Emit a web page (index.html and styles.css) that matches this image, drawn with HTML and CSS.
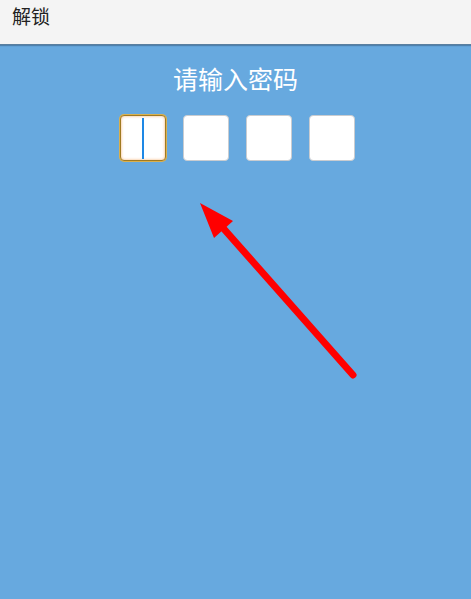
FILE: index.html
```html
<!DOCTYPE html>
<html lang="zh">
<head>
<meta charset="utf-8">
<title>解锁</title>
<link rel="stylesheet" href="styles.css">
</head>
<body>
<header class="topbar">解锁</header>
<main class="content">
  <h1 class="title">请输入密码</h1>
  <div class="pin-row">
    <div class="pin-box active"><span class="cursor"></span></div>
    <div class="pin-box"></div>
    <div class="pin-box"></div>
    <div class="pin-box"></div>
  </div>
  <svg class="arrow" width="471" height="599" viewBox="0 0 471 599">
    <line x1="353" y1="375" x2="216" y2="220" stroke="#ff0000" stroke-width="7" stroke-linecap="round"/>
    <polygon points="200,203 233,221 214,238" fill="#ff0000"/>
  </svg>
</main>
</body>
</html>
```

FILE: styles.css
```css
html, body {
  margin: 0;
  padding: 0;
  height: 100%;
}
body {
  background: #67a9df;
  font-family: "Noto Sans CJK SC", "Noto Sans", sans-serif;
  overflow: hidden;
}
.topbar {
  height: 45px;
  box-sizing: border-box;
  background: #f4f4f4;
  border-bottom: 1px solid #5a7f9f;
  box-shadow: 0 1px 1px rgba(40, 70, 100, 0.4);
  color: #222;
  font-size: 19px;
  line-height: 32px;
  padding-left: 12px;
  position: relative;
  z-index: 1;
}
.content {
  position: relative;
  height: calc(100% - 45px);
  padding-top: 17px;
  box-sizing: border-box;
}
.title {
  margin: 0;
  font-size: 25px;
  font-weight: normal;
  color: #ffffff;
  text-align: center;
  line-height: 32px;
}
.pin-row {
  display: flex;
  justify-content: center;
  gap: 17px;
  margin-top: 21px;
  padding-left: 3px;
}
.pin-box {
  width: 46px;
  height: 46px;
  box-sizing: border-box;
  background: #ffffff;
  border: 1px solid #c9ccd0;
  border-radius: 4px;
  display: flex;
  align-items: center;
  justify-content: center;
}
.pin-box.active {
  border: 1px solid #a07a22;
  box-shadow: 0 0 0 1px #d8b050, inset 0 0 3px #f5b070;
}
.cursor {
  display: block;
  width: 2px;
  height: 41px;
  background: #1e88e5;
}
.arrow {
  position: absolute;
  left: 0;
  top: -45px;
  pointer-events: none;
}
```
